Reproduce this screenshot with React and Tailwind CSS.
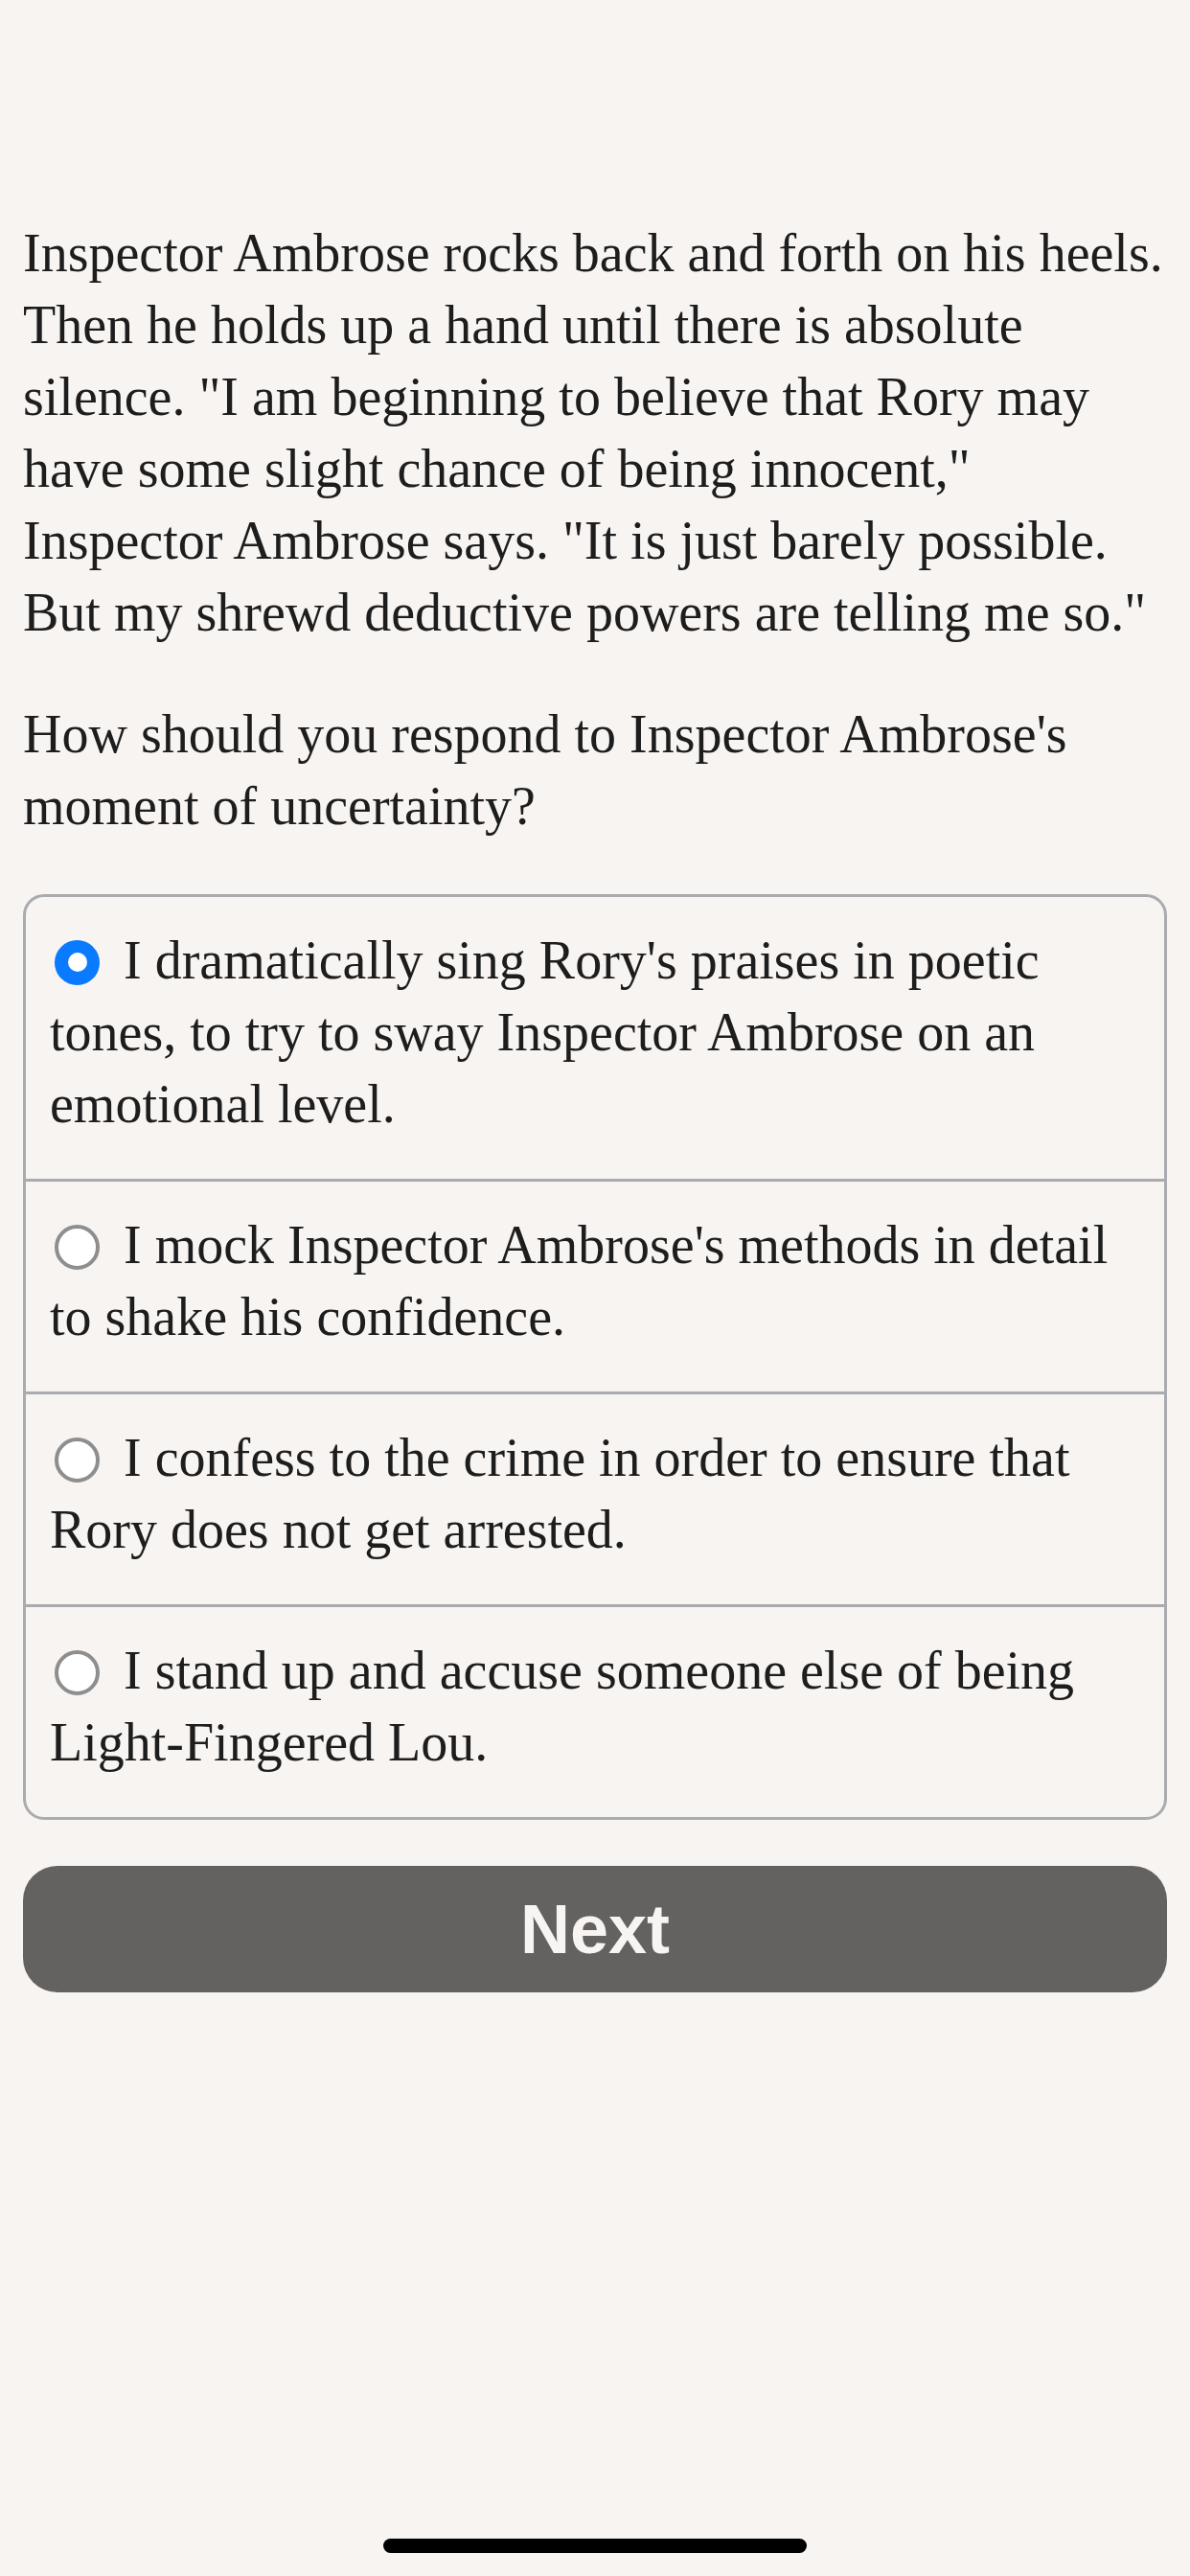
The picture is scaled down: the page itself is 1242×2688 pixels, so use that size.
import React, { useState } from "react";

const story = [
  "Inspector Ambrose rocks back and forth on his heels.",
  "Then he holds up a hand until there is absolute",
  'silence. "I am beginning to believe that Rory may',
  'have some slight chance of being innocent,"',
  'Inspector Ambrose says. "It is just barely possible.',
  'But my shrewd deductive powers are telling me so."',
];

const question = ["How should you respond to Inspector Ambrose's", "moment of uncertainty?"];

const choices = [
  ["I dramatically sing Rory's praises in poetic", "tones, to try to sway Inspector Ambrose on an", "emotional level."],
  ["I mock Inspector Ambrose's methods in detail", "to shake his confidence."],
  ["I confess to the crime in order to ensure that", "Rory does not get arrested."],
  ["I stand up and accuse someone else of being", "Light-Fingered Lou."],
];

const Lines = ({ lines }) =>
  lines.map((line, i) => (
    <React.Fragment key={i}>
      {i > 0 && <br />}
      {line}
    </React.Fragment>
  ));

const Radio = ({ checked }) =>
  checked ? (
    <span className="inline-flex items-center justify-center w-[47px] h-[47px] rounded-full bg-[#0a7aff] mr-[25px] ml-[5px] align-middle relative -top-[4px]">
      <span className="w-[20px] h-[20px] rounded-full bg-white" />
    </span>
  ) : (
    <span className="inline-block w-[47px] h-[47px] rounded-full bg-white border-[4px] border-[#8e8e8e] mr-[25px] ml-[5px] align-middle relative -top-[4px]" />
  );

export default function App() {
  const [picked, setPicked] = useState(0);

  return (
    <div className="h-[2688px] flex flex-col bg-[#f7f4f2] text-[#1d1d1d] font-['Liberation_Serif',serif] overflow-hidden">
      <div className="px-[24px] pt-[227px]">
        <p className="text-[56px] leading-[75px] whitespace-nowrap">
          <Lines lines={story} />
        </p>
        <p className="mt-[52px] text-[56px] leading-[75px] whitespace-nowrap">
          <Lines lines={question} />
        </p>

        <div className="mt-[54px] border-[3px] border-[#a9abae] rounded-[22px] overflow-hidden">
          {choices.map((lines, i) => (
            <label
              key={i}
              onClick={() => setPicked(i)}
              className={`block pl-[25px] pt-[29px] pb-[40px] text-[56px] leading-[75px] whitespace-nowrap cursor-pointer ${
                i > 0 ? "border-t-[3px] border-[#a9abae]" : ""
              }`}
            >
              <Radio checked={picked === i} />
              <Lines lines={lines} />
            </label>
          ))}
        </div>

        <button className="mt-[48px] w-full h-[132px] rounded-[36px] bg-[#636260] text-[#f7f4f2] font-['Liberation_Sans',sans-serif] font-bold text-[72px] leading-none">
          Next
        </button>
      </div>

      <div className="mt-auto mb-[24px] mx-auto w-[442px] h-[15px] rounded-full bg-black" />
    </div>
  );
}
